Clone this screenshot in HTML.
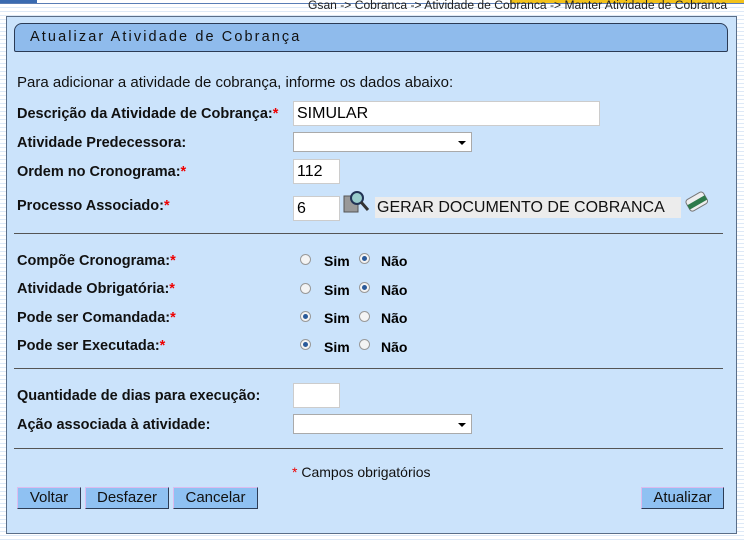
<!DOCTYPE html>
<html><head><meta charset="utf-8"><style>
body{margin:0;width:744px;height:543px;overflow:hidden;font-family:"Liberation Sans",Arial,sans-serif;font-size:13px;
background:repeating-linear-gradient(#fff 0 3px,#dde9f7 3px 4px);position:relative}
.a{position:absolute}
.panel{left:6px;top:16px;width:729px;height:516px;background:#cbe3fb;border:1px solid #5a6e88}
.hdr{left:14px;top:23px;width:712px;height:27px;background:#8fbbec;border:1px solid #2b3b55;border-radius:8px 8px 2px 2px;font-size:14.5px;letter-spacing:2.1px;color:#111;line-height:27px;text-indent:15px}
.l{left:17px;font-weight:bold;color:#111;font-size:14.5px}
.r{color:#e00}
.in{background:#fff;border:1px solid #ccc;height:22px;box-sizing:border-box;font-size:16px;padding-left:3px;line-height:24px}
.sel{background:#fff;border:1px solid #aaa;height:20px;width:179px;box-sizing:border-box}
.sel:after{content:"";position:absolute;right:5px;top:8px;border:4px solid transparent;border-top:4px solid #000;border-bottom:0}
.hr{left:14px;width:709px;height:1px;background:#555}
.rad{width:11px;height:11px;border-radius:50%;border:1px solid #999;background:#f4f4f4;box-sizing:border-box}
.rad.on:after{content:"";position:absolute;left:2px;top:2px;width:5px;height:5px;border-radius:50%;background:#2a5a9a}
.b{top:487px;height:22px;background:#8fc1f2;border:1px solid #2c3c55;border-top-color:#dbe;border-left-color:#dbe;box-sizing:border-box;font-size:15px;line-height:20px;text-align:center;color:#111}
.rb{font-weight:bold;font-size:14px}
</style></head><body>
<div class="a" style="left:0;top:0;width:37px;height:3px;background:#3a6ab0"></div>
<div class="a" style="left:0;top:3px;width:744px;height:1px;background:#5a7db5"></div>
<div class="a" style="left:510px;top:0;width:234px;height:3px;background:#f3c21a"></div>
<div class="a" style="left:308px;top:-2px;font-size:12.1px;color:#222">Gsan -&gt; Cobranca -&gt; Atividade de Cobranca -&gt; Manter Atividade de Cobranca</div>
<div class="a panel"></div>
<div class="a hdr">Atualizar Atividade de Cobrança</div>
<div class="a" style="left:17px;top:74px;color:#111;font-size:15px">Para adicionar a atividade de cobrança, informe os dados abaixo:</div>
<div class="a l" style="top:106px">Descrição da Atividade de Cobrança:<span class="r">*</span></div>
<div class="a in" style="left:293px;top:101px;width:307px;height:25px">SIMULAR</div>
<div class="a l" style="top:135px">Atividade Predecessora:</div>
<div class="a sel" style="left:293px;top:132px"></div>
<div class="a l" style="top:164px">Ordem no Cronograma:<span class="r">*</span></div>
<div class="a in" style="left:293px;top:159px;width:47px;height:25px">112</div>
<div class="a l" style="top:198px">Processo Associado:<span class="r">*</span></div>
<div class="a in" style="left:293px;top:196px;width:47px;height:25px">6</div>
<svg class="a" style="left:343px;top:190px" width="30" height="26"><rect x="1" y="6" width="14" height="16" fill="#999" stroke="#555"/><circle cx="14" cy="8" r="6" fill="#9cc" stroke="#235" stroke-width="2"/><line x1="18" y1="12" x2="25" y2="20" stroke="#333" stroke-width="3"/></svg>
<div class="a" style="left:375px;top:197px;width:304px;height:21px;background:#ececec;font-size:16px;line-height:22px;padding-left:2px;color:#111">GERAR DOCUMENTO DE COBRANCA</div>
<svg class="a" style="left:684px;top:189px" width="26" height="26"><g transform="rotate(-30 13 13)"><rect x="3" y="6" width="20" height="13" rx="3" fill="#eee" stroke="#777"/><rect x="3" y="11" width="20" height="5" fill="#2d7a4a"/></g></svg>
<div class="a hr" style="top:233px"></div>
<div class="a l" style="top:253px">Compõe Cronograma:<span class="r">*</span></div>
<div class="a l" style="top:281px">Atividade Obrigatória:<span class="r">*</span></div>
<div class="a l" style="top:310px">Pode ser Comandada:<span class="r">*</span></div>
<div class="a l" style="top:338px">Pode ser Executada:<span class="r">*</span></div>
<div class="a rad" style="left:300px;top:254px"></div><div class="a rb" style="left:324px;top:253px">Sim</div><div class="a rad on" style="left:359px;top:253px"></div><div class="a rb" style="left:381px;top:253px">Não</div>
<div class="a rad" style="left:300px;top:283px"></div><div class="a rb" style="left:324px;top:282px">Sim</div><div class="a rad on" style="left:359px;top:282px"></div><div class="a rb" style="left:381px;top:282px">Não</div>
<div class="a rad on" style="left:300px;top:311px"></div><div class="a rb" style="left:324px;top:310px">Sim</div><div class="a rad" style="left:359px;top:311px"></div><div class="a rb" style="left:381px;top:310px">Não</div>
<div class="a rad on" style="left:300px;top:339px"></div><div class="a rb" style="left:324px;top:339px">Sim</div><div class="a rad" style="left:359px;top:339px"></div><div class="a rb" style="left:381px;top:339px">Não</div>
<div class="a hr" style="top:368px"></div>
<div class="a l" style="top:388px">Quantidade de dias para execução:</div>
<div class="a in" style="left:293px;top:383px;width:47px;height:25px"></div>
<div class="a l" style="top:417px">Ação associada à atividade:</div>
<div class="a sel" style="left:293px;top:414px"></div>
<div class="a hr" style="top:448px"></div>
<div class="a" style="left:292px;top:464px;color:#111;font-size:14px"><span class="r">*</span> Campos obrigatórios</div>
<div class="a b" style="left:17px;width:64px">Voltar</div>
<div class="a b" style="left:85px;width:84px">Desfazer</div>
<div class="a b" style="left:173px;width:85px">Cancelar</div>
<div class="a b" style="left:641px;width:83px">Atualizar</div>
</body></html>
